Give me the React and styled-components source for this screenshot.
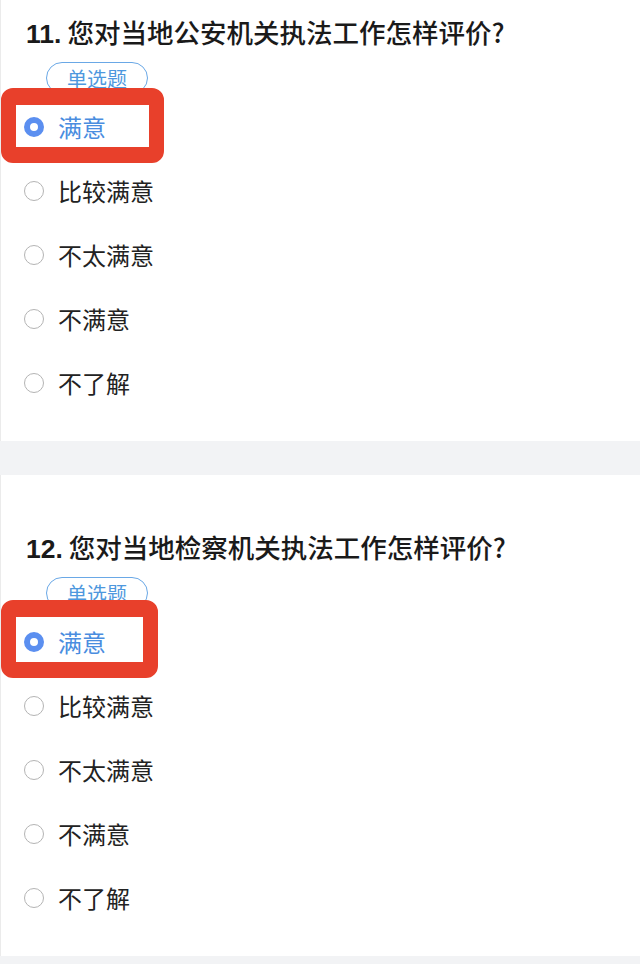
import React from 'react';
import styled, {createGlobalStyle} from 'styled-components';

const GlobalStyle = createGlobalStyle`
  html, body {
    margin: 0;
    padding: 0;
    background: #f2f3f5;
  }
  body {
    font-family: "Noto Sans CJK SC", "Noto Sans", sans-serif;
  }
`;

const Page = styled.div`
  width: 640px;
  min-height: 964px;
  display: flex;
  flex-direction: column;
  gap: 34px;
  background: #f2f3f5;
`;

const Card = styled.section`
  background: #ffffff;
  border-left: 1px solid #ebebeb;
  padding: ${(p) => p.$top}px 0 26px 0;
  box-sizing: border-box;
`;

const Title = styled.h2`
  margin: 0;
  padding-left: 25px;
  height: 36px;
  line-height: 36px;
  font-size: 26.5px;
  font-weight: 500;
  color: #1a1a1a;
  white-space: nowrap;
`;

const Num = styled.span`
  font-family: "Liberation Sans", Arial, sans-serif;
  font-weight: 700;
  margin-right: 6px;
`;

const Tag = styled.span`
  display: inline-flex;
  align-items: center;
  justify-content: center;
  margin: 12px 0 0 45px;
  width: 102px;
  height: 32px;
  box-sizing: border-box;
  border: 1.5px solid #6aa8e6;
  border-radius: 16px;
  font-size: 20px;
  color: #4e98de;
`;

const Options = styled.ul`
  list-style: none;
  margin: 1px 0 0 0;
  padding: 0;
`;

const Row = styled.li`
  position: relative;
  height: 64px;
  display: flex;
  align-items: center;
  gap: 14px;
  padding-left: 23px;
  font-size: 24px;
  color: ${(p) => (p.$checked ? '#4a8ddf' : '#222222')};
`;

const Radio = styled.span`
  flex: none;
  box-sizing: border-box;
  border-radius: 50%;
  width: 20px;
  height: 20px;
  border: ${(p) => (p.$checked ? '6px solid #5b8ff0' : '1.5px solid #b4b4b4')};
  background: #ffffff;
`;

const Label = styled.span`
  line-height: 1;
`;

const Highlight = styled.span`
  position: absolute;
  left: 0;
  top: ${(p) => p.$offset}px;
  width: ${(p) => p.$w}px;
  height: ${(p) => p.$h}px;
  box-sizing: border-box;
  border-style: solid;
  border-color: #e8402b;
  border-width: 17px 15px 16px 15px;
  border-radius: 12px;
  pointer-events: none;
`;

const options = ['满意', '比较满意', '不太满意', '不满意', '不了解'];

const Question = ({num, text, top, box}) => (
  <Card $top={top}>
    <Title>
      <Num>{num}.</Num>
      {text}
    </Title>
    <Tag>单选题</Tag>
    <Options>
      {options.map((o, i) => (
        <Row key={o} $checked={i === 0}>
          <Radio $checked={i === 0} />
          <Label>{o}</Label>
          {i === 0 && <Highlight $offset={box.offset} $w={box.w} $h={box.h} />}
        </Row>
      ))}
    </Options>
  </Card>
);

const App = () => (
  <>
    <GlobalStyle />
    <Page>
      <Question
        num={11}
        text="您对当地公安机关执法工作怎样评价?"
        top={14}
        box={{offset: -7, w: 163, h: 75}}
      />
      <Question
        num={12}
        text="您对当地检察机关执法工作怎样评价?"
        top={54}
        box={{offset: -10, w: 157, h: 78}}
      />
    </Page>
  </>
);

export default App;
